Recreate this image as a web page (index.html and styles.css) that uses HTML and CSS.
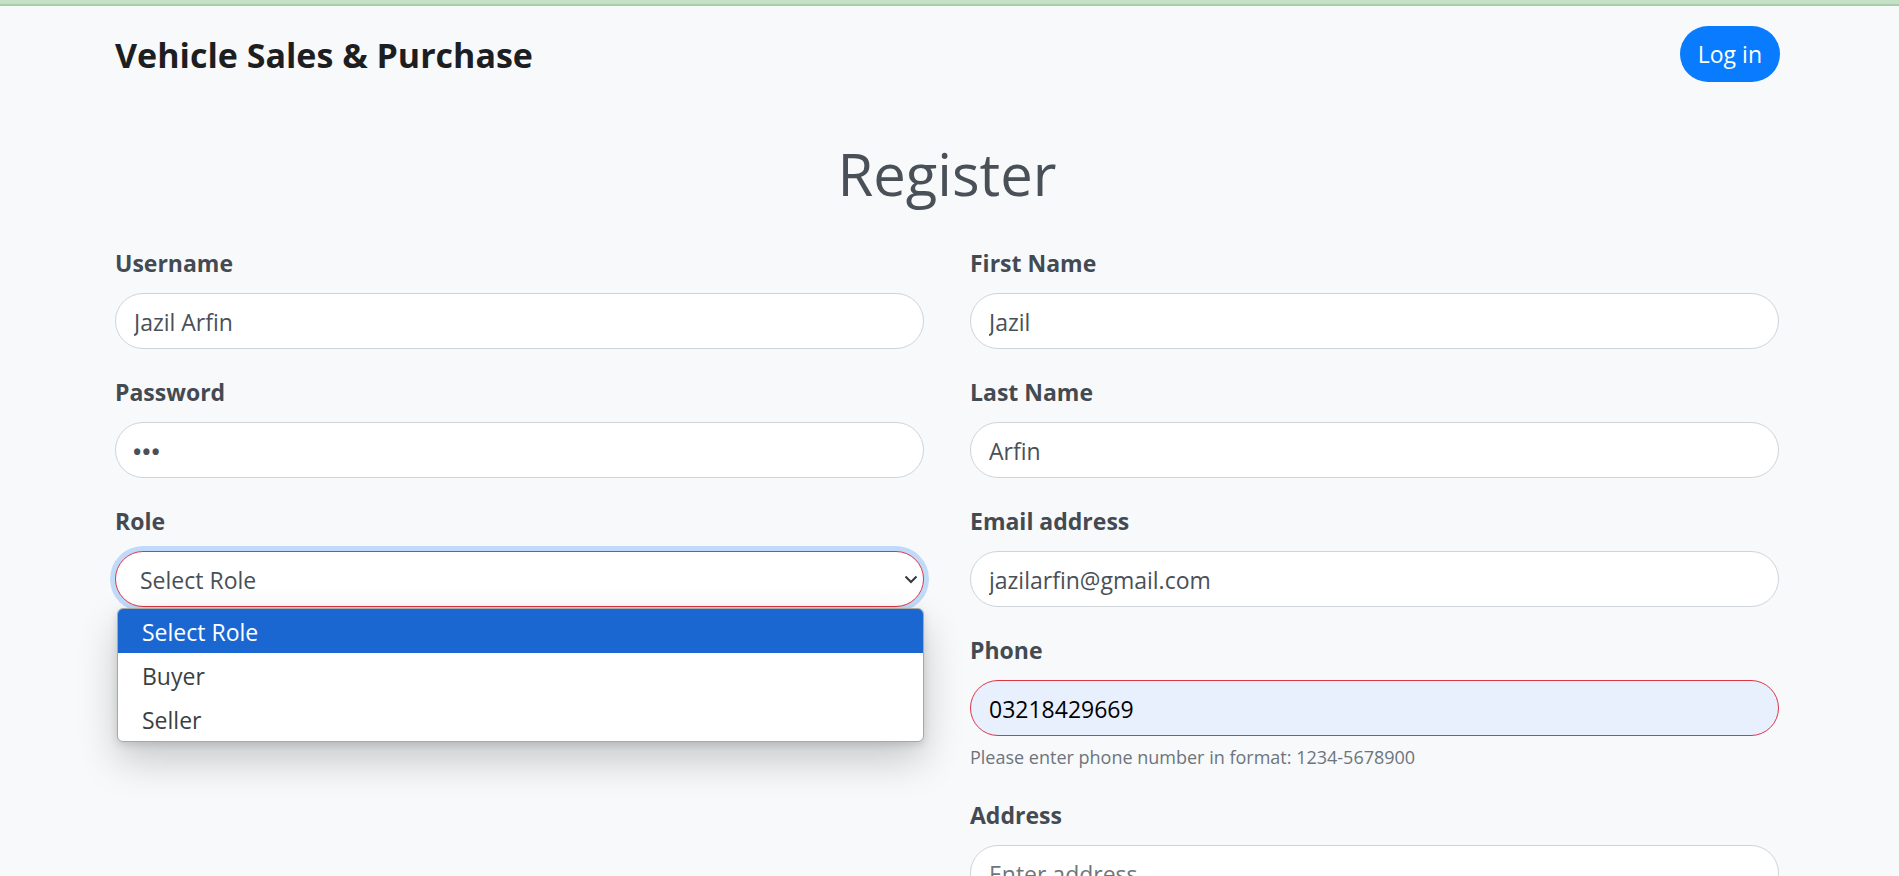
FILE: index.html
```html
<!DOCTYPE html>
<html lang="en">
<head>
<meta charset="utf-8">
<title>Register - Vehicle Sales &amp; Purchase</title>
<link rel="stylesheet" href="styles.css">
</head>
<body>
<div class="topbar"></div>
<div class="page">
  <header class="header">
    <div class="brand">Vehicle Sales &amp; Purchase</div>
    <button class="btn-login" type="button">Log in</button>
  </header>

  <h1 class="title">Register</h1>

  <form class="form-grid">
    <div class="col">
      <div class="group">
        <label class="label">Username</label>
        <input class="control" type="text" value="Jazil Arfin">
      </div>
      <div class="group">
        <label class="label">Password</label>
        <input class="control control-pass" type="text" value="&#8226;&#8226;&#8226;">
      </div>
      <div class="group group-select">
        <label class="label">Role</label>
        <select class="control control-select">
          <option>Select Role</option>
          <option>Buyer</option>
          <option>Seller</option>
        </select>
        <div class="popup">
          <div class="opt opt-active">Select Role</div>
          <div class="opt">Buyer</div>
          <div class="opt">Seller</div>
        </div>
      </div>
    </div>
    <div class="col">
      <div class="group">
        <label class="label">First Name</label>
        <input class="control" type="text" value="Jazil">
      </div>
      <div class="group">
        <label class="label">Last Name</label>
        <input class="control" type="text" value="Arfin">
      </div>
      <div class="group">
        <label class="label">Email address</label>
        <input class="control" type="text" value="jazilarfin@gmail.com">
      </div>
      <div class="group">
        <label class="label">Phone</label>
        <input class="control control-autofill" type="text" value="03218429669">
        <div class="hint">Please enter phone number in format: 1234-5678900</div>
      </div>
      <div class="group">
        <label class="label">Address</label>
        <input class="control" type="text" placeholder="Enter address">
      </div>
    </div>
  </form>
</div>
</body>
</html>
```

FILE: styles.css
```css
* { box-sizing: border-box; }

html, body {
  margin: 0;
  padding: 0;
  background: #f8f9fa;
  font-family: "Open Sans", "Noto Sans", sans-serif;
  color: #495057;
  overflow: hidden;
  height: 876px;
}

.topbar {
  height: 6px;
  background: #c5e1c5;
  border-bottom: 2px solid #a9cca9;
}

.page {
  padding: 0 120px 0 115px;
}

.header {
  display: flex;
  align-items: center;
  justify-content: space-between;
  padding-top: 20px;
}

.brand {
  font-size: 34px;
  font-weight: 700;
  color: #1c1e21;
  margin-top: 2px;
}

.btn-login {
  height: 56px;
  padding: 0 18px;
  margin-right: -1px;
  border: none;
  border-radius: 28px;
  background: #087bfe;
  color: #fff;
  font-family: inherit;
  font-size: 23px;
  line-height: 1;
}

.title {
  margin: 56px 0 35px;
  text-align: center;
  font-size: 58px;
  font-weight: 500;
  line-height: 72px;
  color: #495057;
}

.form-grid {
  display: grid;
  grid-template-columns: 1fr 1fr;
  column-gap: 46px;
}

.group {
  margin-bottom: 25px;
}

.group-select {
  position: relative;
}

.label {
  display: block;
  font-size: 23px;
  line-height: 36px;
  font-weight: 700;
  color: #444a51;
  margin-bottom: 12px;
}

.control {
  display: block;
  width: 100%;
  height: 56px;
  padding: 2px 18px 0;
  border: 1px solid #ced4da;
  border-radius: 28px;
  background: #fff;
  font-family: inherit;
  font-size: 23px;
  color: #495057;
  outline: none;
}

.control::placeholder {
  color: #70767c;
}

.control-pass {
  font-size: 22px;
  font-weight: 700;
  letter-spacing: 1px;
  padding-left: 17px;
}

.control-select {
  appearance: none;
  -webkit-appearance: none;
  padding-left: 24px;
  border-color: #dc3545;
  box-shadow: 0 0 0 5px #c0dafa;
  background: #fff url("data:image/svg+xml,%3Csvg xmlns='http://www.w3.org/2000/svg' width='14' height='10' viewBox='0 0 14 10'%3E%3Cpath d='M1.5 2.5 L7 8 L12.5 2.5' fill='none' stroke='%23343a40' stroke-width='2'/%3E%3C/svg%3E") no-repeat right 5px center;
  background-size: 14px 10px;
}

.control-autofill {
  background: #e8f0fe;
  border-color: #dc3545;
  color: #000;
}

.hint {
  margin-top: 6px;
  font-size: 18px;
  line-height: 30px;
  color: #6c757d;
}

.popup {
  position: absolute;
  left: 2px;
  right: 0;
  top: 105px;
  background: #fff;
  border: 1px solid #a8a8a8;
  border-radius: 6px;
  overflow: hidden;
  box-shadow: 0 18px 40px rgba(0, 0, 0, 0.2), 0 3px 8px rgba(0, 0, 0, 0.12);
  z-index: 5;
}

.opt {
  height: 44px;
  padding: 2px 0 0 24px;
  font-size: 23px;
  line-height: 42px;
  color: #3b3f44;
}

.opt-active {
  background: #1a67d2;
  color: #fff;
}
```
